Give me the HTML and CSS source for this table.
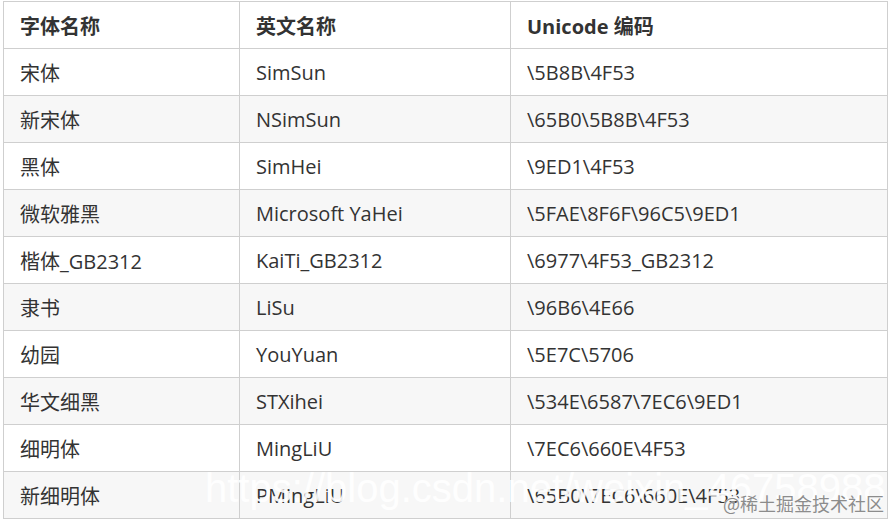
FILE: index.html
```html
<!DOCTYPE html>
<html lang="zh-CN">
<head>
<meta charset="utf-8">
<title>字体</title>
<link rel="stylesheet" href="styles.css">
</head>
<body>
<div class="wrap">
<table class="fonts">
<colgroup><col class="c1"><col class="c2"><col class="c3"></colgroup>
<thead>
<tr><th>字体名称</th><th>英文名称</th><th>Unicode 编码</th></tr>
</thead>
<tbody>
<tr><td>宋体</td><td>SimSun</td><td>\5B8B\4F53</td></tr>
<tr><td>新宋体</td><td>NSimSun</td><td>\65B0\5B8B\4F53</td></tr>
<tr><td>黑体</td><td>SimHei</td><td>\9ED1\4F53</td></tr>
<tr><td>微软雅黑</td><td>Microsoft YaHei</td><td>\5FAE\8F6F\96C5\9ED1</td></tr>
<tr><td>楷体_GB2312</td><td>KaiTi_GB2312</td><td>\6977\4F53_GB2312</td></tr>
<tr><td>隶书</td><td>LiSu</td><td>\96B6\4E66</td></tr>
<tr><td>幼园</td><td>YouYuan</td><td>\5E7C\5706</td></tr>
<tr><td>华文细黑</td><td>STXihei</td><td>\534E\6587\7EC6\9ED1</td></tr>
<tr><td>细明体</td><td>MingLiU</td><td>\7EC6\660E\4F53</td></tr>
<tr><td>新细明体</td><td>PMingLiU</td><td>\65B0\7EC6\660E\4F53</td></tr>
</tbody>
</table>
<div class="wm-url">https://blog.csdn.net/weixin_46758988</div>
<div class="wm-brand">@稀土掘金技术社区</div>
</div>
</body>
</html>
```
FILE: styles.css
```css
html, body {
  margin: 0;
  padding: 0;
  background: #ffffff;
}
.wrap {
  position: relative;
  width: 890px;
  height: 520px;
  overflow: hidden;
  padding: 1px 0 0 3px;
  box-sizing: border-box;
}
.fonts {
  border-collapse: collapse;
  table-layout: fixed;
  width: 884px;
  font-family: "Open Sans", "Noto Sans CJK SC", sans-serif;
  font-size: 20px;
  color: #333333;
}
.c1 { width: 236px; }
.c2 { width: 271px; }
.c3 { width: 377px; }
.fonts th,
.fonts td {
  border: 1px solid #cfcfcf;
  height: 47px;
  padding: 0 16px;
  text-align: left;
  vertical-align: middle;
  box-sizing: border-box;
  white-space: nowrap;
}
.fonts th {
  font-weight: 700;
  background: #ffffff;
}
.fonts tbody tr:nth-child(even) td {
  background: #f7f7f7;
}
.wm-url {
  position: absolute;
  left: 205px;
  top: 465px;
  font-family: "Liberation Sans", sans-serif;
  font-size: 40px;
  line-height: 46px;
  color: rgba(255, 255, 255, 0.92);
  white-space: nowrap;
}
.wm-brand {
  position: absolute;
  left: 723px;
  top: 490px;
  font-family: "Noto Sans CJK SC", sans-serif;
  font-size: 18px;
  color: #8c8c8c;
  text-shadow: 0 0 1px #ffffff;
  white-space: nowrap;
}
```
